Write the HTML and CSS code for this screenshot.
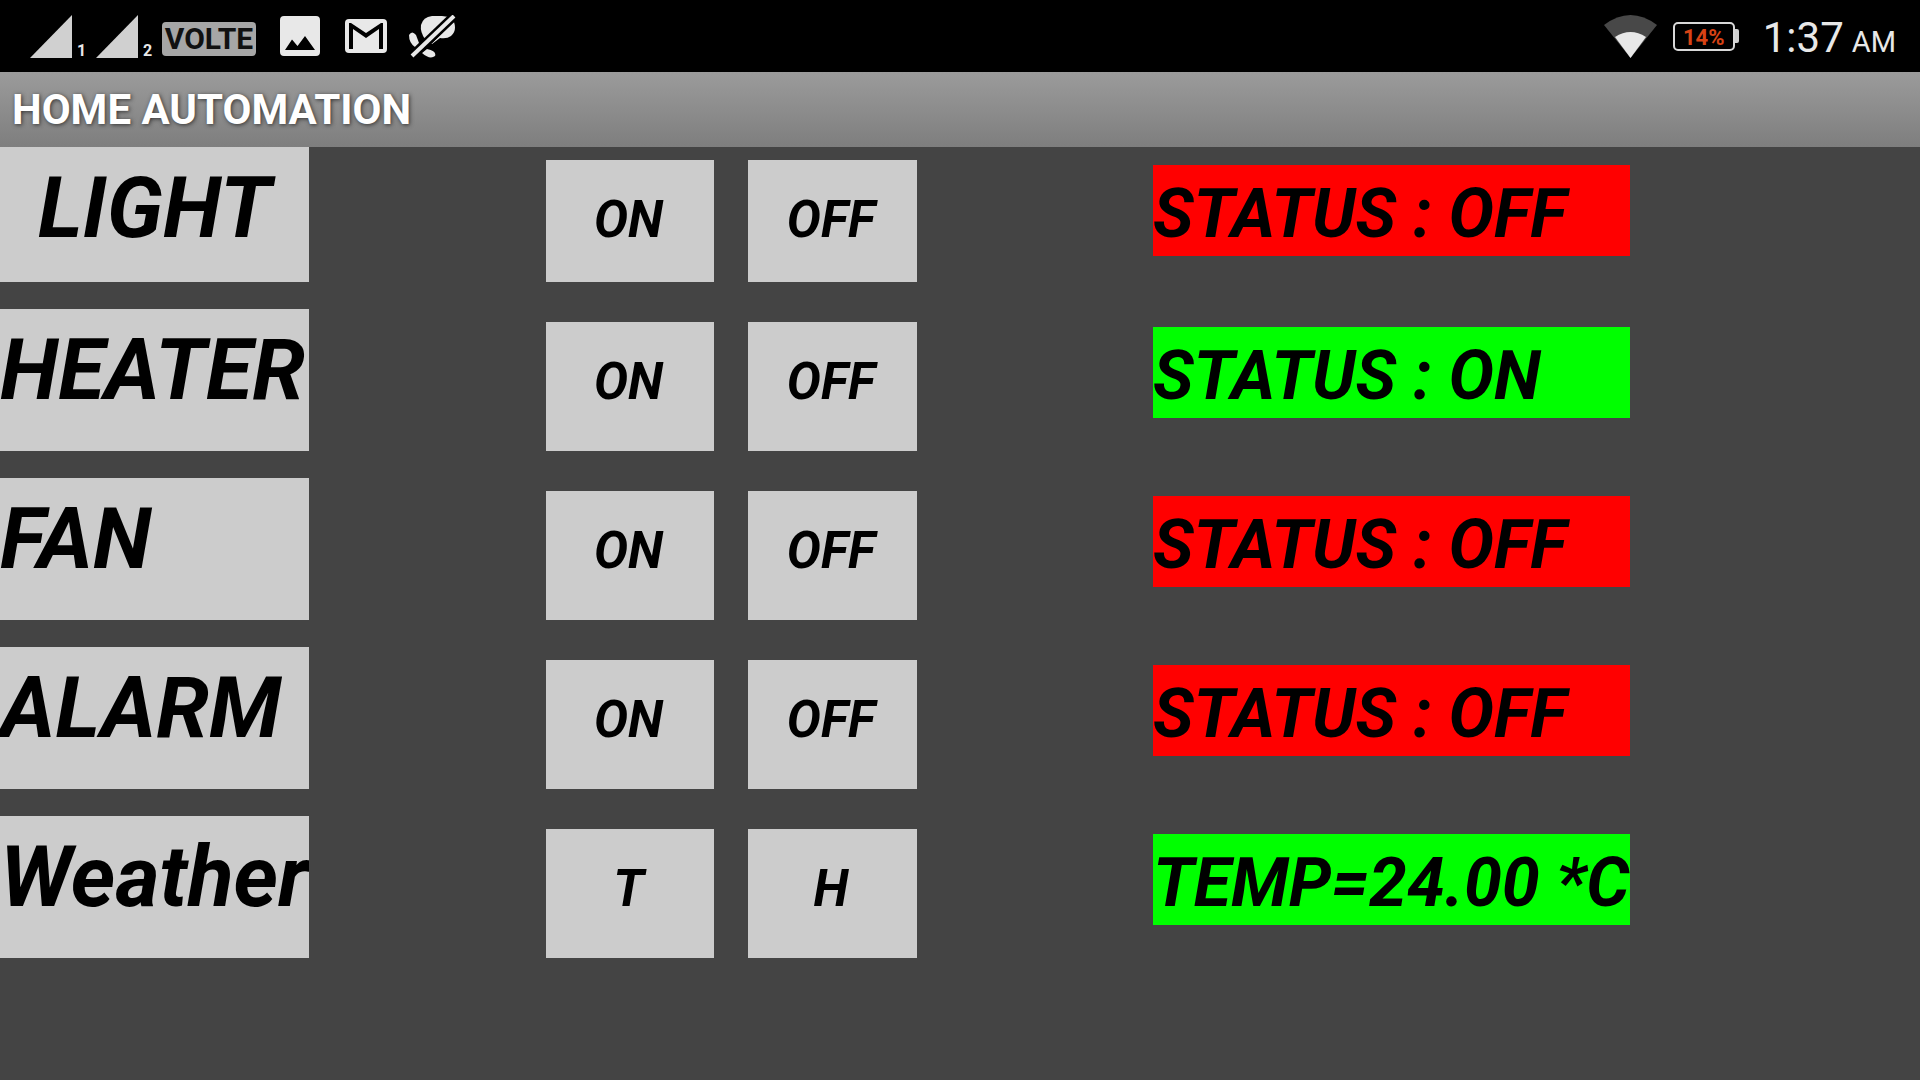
FILE: index.html
```html
<!DOCTYPE html>
<html lang="en">
<head>
<meta charset="utf-8">
<meta name="viewport" content="width=device-width, initial-scale=1">
<title>Home Automation</title>
<link rel="stylesheet" href="styles.css">
</head>
<body>
<div class="system-bar">
  <div class="indicators">
    <div class="signal">
      <svg width="42" height="43" viewBox="0 0 42 43" aria-hidden="true"><path d="M42 0V43H0Z" fill="#d0d0d0"/></svg>
      <span class="sim">1</span>
    </div>
    <div class="signal">
      <svg width="42" height="43" viewBox="0 0 42 43" aria-hidden="true"><path d="M42 0V43H0Z" fill="#d0d0d0"/></svg>
      <span class="sim">2</span>
    </div>
    <span class="volte">VOLTE</span>
    <svg class="icon-picture" width="40" height="40" viewBox="0 0 40 40" aria-hidden="true"><path fill="#e8e8e8" fill-rule="evenodd" d="M4 0H36Q40 0 40 4V36Q40 40 36 40H4Q0 40 0 36V4Q0 0 4 0ZM5 34H35L25 20L17.500 30L12 23.500Z"/></svg>
    <svg class="icon-mail" width="42" height="34" viewBox="0 0 42 34" aria-hidden="true"><rect width="42" height="34" rx="4" fill="#e8e8e8"/><path d="M4 30V4H6L21 14L36 4H38V30H34V10L21 19L8 10V30Z" fill="#000"/></svg>
    <svg class="icon-muted" width="48" height="43" viewBox="0 0 48 43" aria-hidden="true"><g fill="#e8e8e8"><path d="M17 24Q12 17 13 10Q15 2 24 1H34L41 2L19 24Z"/><path d="M23 29L46 7Q49 16 43 21Q39 24 32 23L24 29Z"/><path d="M1 20Q4 15 8 20L11 28L7 32Q1 28 1 20Z"/><path d="M14 38L19 34Q29 36 27 41Q22 45 14 38Z"/></g><path d="M2 43L48 -1" stroke="#000" stroke-width="9"/><path d="M4 41L46 1" stroke="#e8e8e8" stroke-width="4"/></svg>
  </div>
  <div class="indicators">
    <svg width="53" height="43" viewBox="0 0 53 43" aria-hidden="true"><path d="M0 10Q26.500 -10 53 10L26.500 43Z" fill="#484848"/><path d="M11 22Q26.500 12 42 22L26.500 43Z" fill="#e8e8e8"/></svg>
    <div class="battery"><span class="charge">14%</span></div>
    <div class="clock"><span>1:37</span><span class="meridiem">AM</span></div>
  </div>
</div>
<header class="title-bar"><h1 class="title">HOME AUTOMATION</h1></header>
<main class="devices">
  <section class="device">
    <h2 class="name indented">LIGHT</h2>
    <button class="switch first" type="button">ON</button>
    <button class="switch second" type="button">OFF</button>
    <p class="status off">STATUS : OFF</p>
  </section>
  <section class="device">
    <h2 class="name">HEATER</h2>
    <button class="switch first" type="button">ON</button>
    <button class="switch second" type="button">OFF</button>
    <p class="status on">STATUS : ON</p>
  </section>
  <section class="device">
    <h2 class="name">FAN</h2>
    <button class="switch first" type="button">ON</button>
    <button class="switch second" type="button">OFF</button>
    <p class="status off">STATUS : OFF</p>
  </section>
  <section class="device">
    <h2 class="name">ALARM</h2>
    <button class="switch first" type="button">ON</button>
    <button class="switch second" type="button">OFF</button>
    <p class="status off">STATUS : OFF</p>
  </section>
  <section class="device">
    <h2 class="name">Weather</h2>
    <button class="switch first" type="button">T</button>
    <button class="switch second" type="button">H</button>
    <p class="status on">TEMP=24.00 *C</p>
  </section>
</main>
</body>
</html>
```
FILE: styles.css
```css
* {
  box-sizing: border-box;
}

body {
  margin: 0;
  min-height: 100vh;
  background: #444;
  color: #000;
  font-family: Roboto, "Liberation Sans", sans-serif;
}

.system-bar {
  display: flex;
  justify-content: space-between;
  height: 72px;
  padding: 0 24px 0 30px;
  background: #000;
  color: #e8e8e8;
}

.indicators {
  display: flex;
  align-items: center;
}

.indicators svg {
  flex: none;
}

.signal {
  display: flex;
  align-items: flex-end;
  gap: 5px;
  width: 66px;
}

.sim {
  font-size: 16px;
  font-weight: 700;
  line-height: 14px;
}

.volte {
  width: 94px;
  height: 34px;
  margin-top: 6px;
  border-radius: 4px;
  background: #a6a6a6;
  color: #111;
  font-size: 30px;
  font-weight: 700;
  line-height: 34px;
  text-align: center;
}

.icon-picture {
  margin-left: 24px;
}

.icon-mail {
  margin-left: 25px;
}

.icon-muted {
  margin-left: 21px;
}

.battery {
  display: flex;
  align-items: center;
  margin-left: 16px;
}

.battery::after {
  content: "";
  width: 4px;
  height: 14px;
  border-radius: 0 2px 2px 0;
  background: #d0d0d0;
}

.charge {
  width: 62px;
  height: 29px;
  border: 2px solid #d8d8d8;
  border-radius: 5px;
  color: #d84315;
  font-size: 22px;
  font-weight: 700;
  line-height: 27px;
  text-align: center;
}

.clock {
  display: flex;
  align-items: baseline;
  gap: 8px;
  margin: 8px 0 0 24px;
  font-size: 42px;
  line-height: 48px;
}

.meridiem {
  font-size: 29px;
}

.title-bar {
  height: 75px;
  padding: 14px 12px;
  background: linear-gradient(#9b9b9b, #7e7e7e);
}

.title {
  margin: 0;
  color: #fff;
  font-size: 42px;
  font-weight: 700;
  line-height: 48px;
  text-shadow: 1px 1px 4px #333;
}

.devices {
  display: grid;
  gap: 27px;
}

.device {
  display: grid;
  grid-template-columns: 309fr 237fr 168fr 34fr 169fr 236fr 477fr 290fr;
  min-height: 142px;
}

.device:first-child {
  min-height: 135px;
}

.name,
.switch,
.status {
  min-width: 0;
  overflow: hidden;
  font-style: italic;
  font-weight: 700;
  white-space: nowrap;
}

.name {
  grid-column: 1;
  margin: 0;
  padding-top: 12px;
  background: #ccc;
  font-size: 85px;
  line-height: 98px;
}

.indented {
  padding-left: 38px;
}

.switch {
  display: flex;
  align-items: flex-start;
  justify-content: center;
  margin: 13px 0 0;
  padding: 30px 3px 0 0;
  border: 0;
  background: #ccc;
  color: #000;
  font-family: inherit;
  font-size: 51px;
  line-height: 60px;
}

.first {
  grid-column: 3;
}

.second {
  grid-column: 5;
}

.status {
  grid-column: 7;
  align-self: start;
  height: 91px;
  margin: 18px 0 0;
  padding-top: 9px;
  font-size: 68px;
  line-height: 80px;
}

.on {
  background: #0f0;
}

.off {
  background: #f00;
}
```
